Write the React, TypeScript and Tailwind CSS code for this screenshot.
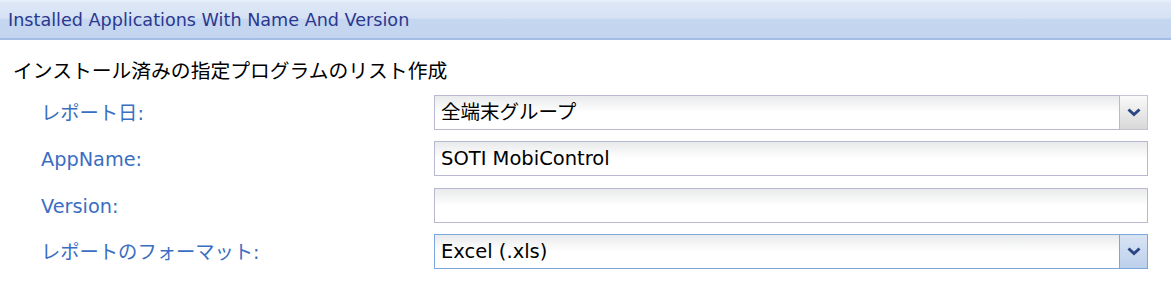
import React from "react";

const font = { fontFamily: '"DejaVu Sans", "Noto Sans CJK JP", sans-serif' };

function Chevron() {
  return (
    <svg width="14" height="9" viewBox="0 0 14 9">
      <path d="M1.5 1.5 L7 6.5 L12.5 1.5" fill="none" stroke="#2b4684" strokeWidth="3" strokeLinejoin="miter" />
    </svg>
  );
}

function Select({ value, focused }: { value: string; focused?: boolean }) {
  return (
    <div className="flex h-[35px] w-[714px]">
      <div
        className={`flex-1 flex items-center pl-[6px] border bg-gradient-to-b from-[#e9eaeb] via-white to-white text-[19.5px] text-black ${
          focused ? "border-[#7ba7dc]" : "border-[#b9b8d2]"
        }`}
      >
        {value}
      </div>
      <div
        className={`w-[28px] flex items-center justify-center border border-l-0 ${
          focused
            ? "border-[#7ba7dc] bg-gradient-to-b from-[#d9e4f4] to-[#bcd0ec]"
            : "border-[#c4c4d4] bg-gradient-to-b from-[#fafafa] to-[#d8d8d8]"
        }`}
      >
        <Chevron />
      </div>
    </div>
  );
}

function Input({ value }: { value: string }) {
  return (
    <div className="h-[35px] w-[714px] flex items-center pl-[6px] border border-[#b9b8d2] bg-gradient-to-b from-[#e9eaeb] via-white to-white text-[19.5px] text-black">
      {value}
    </div>
  );
}

function Row({ label, children }: { label: string; children: React.ReactNode }) {
  return (
    <div className="flex items-center">
      <div className="w-[393px] pt-[4px] text-[19.3px] text-[#3a6ec2]">{label}</div>
      {children}
    </div>
  );
}

export default function App() {
  return (
    <div className="w-[1171px] h-[301px] bg-white overflow-hidden" style={font}>
      <div className="h-[40px] border-t-2 border-t-[#e6eefa] border-b-2 border-b-[#a3bde6] bg-[linear-gradient(to_bottom,#dde7f6_0%,#d6e2f4_45%,#c5d7f0_48%,#c2d4ef_100%)] flex items-center pl-[8px]">
        <span className="text-[17.6px] text-[#2b388f]">Installed Applications With Name And Version</span>
      </div>
      <div className="pl-[13px] mt-[19px] text-[19.8px] leading-[26px] text-black">
        インストール済みの指定プログラムのリスト作成
      </div>
      <div className="pl-[41px] mt-[10px] flex flex-col">
        <Row label="レポート日:">
          <Select value="全端末グループ" />
        </Row>
        <div className="h-[11px]" />
        <Row label="AppName:">
          <Input value="SOTI MobiControl" />
        </Row>
        <div className="h-[12px]" />
        <Row label="Version:">
          <Input value="" />
        </Row>
        <div className="h-[11px]" />
        <Row label="レポートのフォーマット:">
          <Select value="Excel (.xls)" focused />
        </Row>
      </div>
    </div>
  );
}
